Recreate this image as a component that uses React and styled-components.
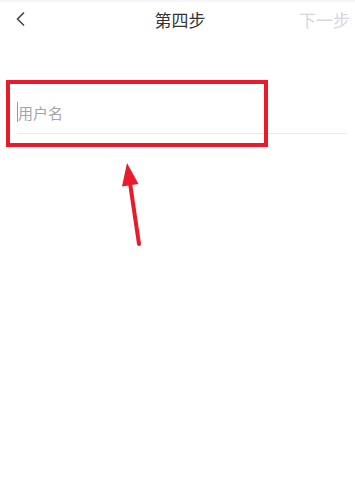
import styled, { createGlobalStyle } from 'styled-components';

const GlobalStyle = createGlobalStyle`
  html, body {
    margin: 0;
    padding: 0;
    background: #ffffff;
  }
  body {
    font-family: "Noto Sans CJK SC", "Noto Sans", sans-serif;
  }
`;

const Page = styled.div`
  position: relative;
  width: 355px;
  height: 503px;
  background: #ffffff;
  overflow: hidden;
  border-top: 2px solid #f6f6f8;
  box-sizing: border-box;
`;

const NavBar = styled.div`
  display: grid;
  grid-template-columns: 1fr auto 1fr;
  align-items: center;
  height: 34px;
  padding: 0 5px 0 10px;
`;

const BackButton = styled.button`
  justify-self: start;
  display: flex;
  align-items: center;
  margin-left: 5px;
  padding: 0;
  border: none;
  background: none;
  color: #444450;
`;

const Title = styled.div`
  font-size: 17px;
  color: #333338;
  line-height: 1;
`;

const NextButton = styled.button`
  justify-self: end;
  padding: 0;
  border: none;
  background: none;
  font-family: inherit;
  font-size: 17px;
  line-height: 1;
  color: #d5d6de;
`;

const Form = styled.div`
  padding: 56px 8px 0 17px;
`;

const Field = styled.label`
  display: flex;
  align-items: center;
  height: 41px;
  border-bottom: 1px solid #e8e8ef;
`;

const Caret = styled.span`
  width: 1px;
  height: 20px;
  margin-bottom: 1px;
  background: #9a9aa2;
`;

const Input = styled.input`
  flex: 1;
  border: none;
  outline: none;
  padding: 0;
  margin-left: 0;
  font-family: inherit;
  font-size: 15px;
  color: #333;
  background: transparent;
  &::placeholder {
    color: #a4a4ac;
  }
`;

const Highlight = styled.div`
  position: absolute;
  left: 6px;
  top: 78px;
  width: 262px;
  height: 67px;
  border: 4px solid #e81a2b;
  box-sizing: border-box;
  pointer-events: none;
`;

const Overlay = styled.svg`
  position: absolute;
  left: 0;
  top: -2px;
  pointer-events: none;
`;

export default function App() {
  return (
    <>
      <GlobalStyle />
      <Page>
        <NavBar>
          <BackButton aria-label="返回">
            <svg width="11" height="16" viewBox="0 0 11 16">
              <path d="M9 1.5 L2.5 8 L9 14.5" fill="none" stroke="currentColor" strokeWidth="1.6" />
            </svg>
          </BackButton>
          <Title>第四步</Title>
          <NextButton>下一步</NextButton>
        </NavBar>
        <Form>
          <Field>
            <Caret />
            <Input placeholder="用户名" />
          </Field>
        </Form>
        <Highlight />
        <Overlay width="355" height="503" viewBox="0 0 355 503">
          <line x1="139" y1="244" x2="130" y2="183" stroke="#e81a2b" strokeWidth="4" strokeLinecap="round" />
          <polygon points="127,163 138.5,184 122,186.5" fill="#e81a2b" />
        </Overlay>
      </Page>
    </>
  );
}
